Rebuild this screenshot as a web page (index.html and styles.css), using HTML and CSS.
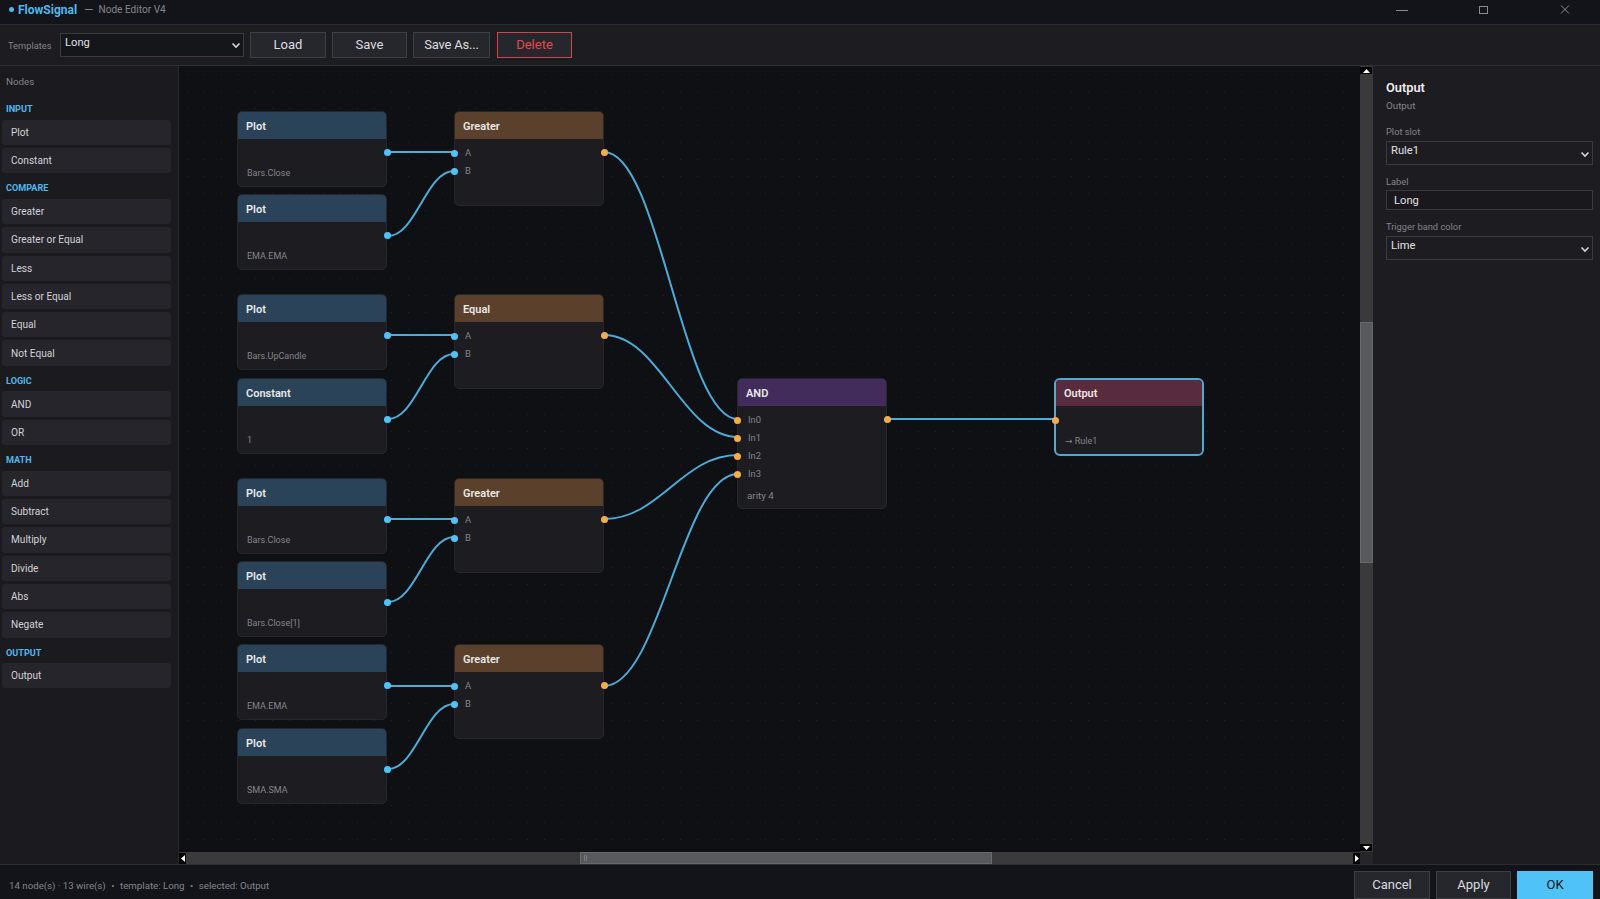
FILE: index.html
```html
<!DOCTYPE html>
<html lang="en">
<head>
  <meta charset="UTF-8">
  <title>FlowSignal - Node Editor V4</title>
  <link rel="stylesheet" href="styles.css">
</head>
<body>

  <!-- Title bar -->
  <header class="titlebar">
    <span class="brand"><span class="brand-dot"></span>FlowSignal</span>
    <span class="title-sep">—</span>
    <span class="title-text">Node Editor V4</span>
    <div class="window-btns">
      <svg width="12" height="12" viewBox="0 0 12 12"><path d="M0 6.5h12" stroke="#8a8a90" fill="none"/></svg>
      <svg width="12" height="12" viewBox="0 0 12 12"><rect x="1.5" y="2.5" width="8" height="7" stroke="#8a8a90" fill="none"/></svg>
      <svg width="12" height="12" viewBox="0 0 12 12"><path d="M1 1.5l8 8M9 1.5l-8 8" stroke="#8a8a90" fill="none"/></svg>
    </div>
  </header>

  <!-- Toolbar -->
  <div class="toolbar">
    <span class="tb-label">Templates</span>
    <div class="combo combo-tb">
      <select><option>Long</option></select>
      <svg class="chev" width="10" height="7" viewBox="0 0 10 7"><path d="M1.5 1.5L5 5l3.5-3.5" stroke="#d5d5d8" stroke-width="1.6" fill="none"/></svg>
    </div>
    <button class="btn btn-load">Load</button>
    <button class="btn btn-save">Save</button>
    <button class="btn btn-saveas">Save As...</button>
    <button class="btn btn-delete">Delete</button>
  </div>

  <div class="main">

    <!-- Node palette -->
    <aside class="palette">
      <div class="palette-title">Nodes</div>
      <div class="group">INPUT</div>
      <div class="item">Plot</div>
      <div class="item">Constant</div>
      <div class="group">COMPARE</div>
      <div class="item">Greater</div>
      <div class="item">Greater or Equal</div>
      <div class="item">Less</div>
      <div class="item">Less or Equal</div>
      <div class="item">Equal</div>
      <div class="item">Not Equal</div>
      <div class="group">LOGIC</div>
      <div class="item">AND</div>
      <div class="item">OR</div>
      <div class="group">MATH</div>
      <div class="item">Add</div>
      <div class="item">Subtract</div>
      <div class="item">Multiply</div>
      <div class="item">Divide</div>
      <div class="item">Abs</div>
      <div class="item">Negate</div>
      <div class="group">OUTPUT</div>
      <div class="item">Output</div>
    </aside>

    <!-- Canvas, origin is at 179,66 on the page -->
    <div class="canvas-wrap">
      <div class="canvas-row">
        <div class="canvas">
          <svg class="wires" width="1182" height="786" fill="none">
            <path d="M209 86H275"/>
            <path d="M209 170C237 170 247 105 275 105"/>
            <path d="M209 269H275"/>
            <path d="M209 353C237 353 247 288 275 288"/>
            <path d="M209 453H275"/>
            <path d="M209 536C237 536 247 471 275 471"/>
            <path d="M209 620H275"/>
            <path d="M209 703C237 703 247 638 275 638"/>
            <path d="M425 86C481 86 503 353 559 353"/>
            <path d="M425 269C481 269 503 371 559 371"/>
            <path d="M425 453C481 453 503 389 559 389"/>
            <path d="M425 620C481 620 503 408 559 408"/>
            <path d="M709 353H876"/>
          </svg>

          <div class="node" style="left:58px;top:45px"><div class="node-head head-input">Plot</div><div class="node-foot">Bars.Close</div><i class="port out blue"></i></div>
          <div class="node" style="left:58px;top:128px"><div class="node-head head-input">Plot</div><div class="node-foot">EMA.EMA</div><i class="port out blue"></i></div>
          <div class="node" style="left:58px;top:228px"><div class="node-head head-input">Plot</div><div class="node-foot">Bars.UpCandle</div><i class="port out blue"></i></div>
          <div class="node" style="left:58px;top:312px"><div class="node-head head-input">Constant</div><div class="node-foot">1</div><i class="port out blue"></i></div>
          <div class="node" style="left:58px;top:412px"><div class="node-head head-input">Plot</div><div class="node-foot">Bars.Close</div><i class="port out blue"></i></div>
          <div class="node" style="left:58px;top:495px"><div class="node-head head-input">Plot</div><div class="node-foot">Bars.Close[1]</div><i class="port out blue"></i></div>
          <div class="node" style="left:58px;top:578px"><div class="node-head head-input">Plot</div><div class="node-foot">EMA.EMA</div><i class="port out blue"></i></div>
          <div class="node" style="left:58px;top:662px"><div class="node-head head-input">Plot</div><div class="node-foot">SMA.SMA</div><i class="port out blue"></i></div>

          <div class="node node-cmp" style="left:275px;top:45px"><div class="node-head head-cmp">Greater</div><div class="pin">A<i class="port in blue"></i></div><div class="pin">B<i class="port in blue"></i></div><i class="port out orange"></i></div>
          <div class="node node-cmp" style="left:275px;top:228px"><div class="node-head head-cmp">Equal</div><div class="pin">A<i class="port in blue"></i></div><div class="pin">B<i class="port in blue"></i></div><i class="port out orange"></i></div>
          <div class="node node-cmp" style="left:275px;top:412px"><div class="node-head head-cmp">Greater</div><div class="pin">A<i class="port in blue"></i></div><div class="pin">B<i class="port in blue"></i></div><i class="port out orange"></i></div>
          <div class="node node-cmp" style="left:275px;top:578px"><div class="node-head head-cmp">Greater</div><div class="pin">A<i class="port in blue"></i></div><div class="pin">B<i class="port in blue"></i></div><i class="port out orange"></i></div>

          <div class="node node-and" style="left:558px;top:312px">
            <div class="node-head head-logic">AND</div>
            <div class="pin">In0<i class="port in orange"></i></div>
            <div class="pin">In1<i class="port in orange"></i></div>
            <div class="pin">In2<i class="port in orange"></i></div>
            <div class="pin">In3<i class="port in orange"></i></div>
            <div class="node-note">arity 4</div>
            <i class="port out orange"></i>
          </div>

          <div class="node node-selected" style="left:875px;top:312px">
            <div class="node-head head-output">Output</div>
            <div class="node-foot"><span class="arrow">→</span> Rule1</div>
            <i class="port in orange"></i>
          </div>
        </div>

        <div class="vscroll">
          <span class="sb-arrow"><svg width="7" height="4" viewBox="0 0 7 4"><path d="M3.5 0L7 4H0z" fill="#fff"/></svg></span>
          <div class="vscroll-track"><div class="vscroll-thumb"></div></div>
          <span class="sb-arrow"><svg width="7" height="4" viewBox="0 0 7 4"><path d="M0 0h7L3.5 4z" fill="#fff"/></svg></span>
        </div>
      </div>

      <div class="hscroll">
        <span class="sb-arrow-h"><svg width="4" height="7" viewBox="0 0 4 7"><path d="M4 0v7L0 3.5z" fill="#fff"/></svg></span>
        <div class="hscroll-track"><div class="hscroll-thumb"><span class="grip"></span></div></div>
        <span class="sb-arrow-h"><svg width="4" height="7" viewBox="0 0 4 7"><path d="M0 0l4 3.5L0 7z" fill="#fff"/></svg></span>
        <span class="sb-corner"></span>
      </div>
    </div>

    <!-- Properties -->
    <aside class="props">
      <div class="props-title">Output</div>
      <div class="props-sub">Output</div>
      <label class="field-label label-first">Plot slot</label>
      <div class="combo combo-prop">
        <select><option>Rule1</option></select>
        <svg class="chev" width="10" height="7" viewBox="0 0 10 7"><path d="M1.5 1.5L5 5l3.5-3.5" stroke="#d5d5d8" stroke-width="1.6" fill="none"/></svg>
      </div>
      <label class="field-label">Label</label>
      <input class="text-input" type="text" value="Long">
      <label class="field-label">Trigger band color</label>
      <div class="combo combo-prop">
        <select><option>Lime</option></select>
        <svg class="chev" width="10" height="7" viewBox="0 0 10 7"><path d="M1.5 1.5L5 5l3.5-3.5" stroke="#d5d5d8" stroke-width="1.6" fill="none"/></svg>
      </div>
    </aside>
  </div>

  <!-- Status bar -->
  <footer class="statusbar">
    <span class="status-text">14 node(s) · 13 wire(s)<span class="status-dot">•</span>template: Long<span class="status-dot">•</span>selected: Output</span>
    <div class="footer-btns">
      <button class="btn btn-foot btn-cancel">Cancel</button>
      <button class="btn btn-foot">Apply</button>
      <button class="btn btn-foot btn-ok">OK</button>
    </div>
  </footer>

</body>
</html>
```

FILE: styles.css
```css
* {
  box-sizing: border-box;
}

html, body {
  height: 100%;
}

body {
  display: flex;
  flex-direction: column;
  margin: 0;
  overflow: hidden;
  background-color: #15161a;
  color: #d8d8dc;
  font-family: Roboto, "Noto Sans", sans-serif;
  font-size: 10px;
}

/* Title bar */
.titlebar {
  display: flex;
  align-items: center;
  flex: 0 0 25px;
  padding: 0 0 5px 9px;
  background-color: #131419;
  border-bottom: 1px solid #2c2d32;
}

.brand {
  display: flex;
  align-items: center;
  color: #4fb7ec;
  font-size: 12px;
  font-weight: 700;
}

.brand-dot {
  width: 5px;
  height: 5px;
  margin-right: 4px;
  border-radius: 50%;
  background-color: #4fb7ec;
}

.title-sep {
  margin: 0 5px 0 7px;
  color: #85858b;
  font-size: 12px;
}

.title-text {
  color: #85858b;
  font-size: 10.1px;
}

.window-btns {
  display: flex;
  gap: 70px;
  margin-left: auto;
  margin-right: 28px;
}

/* Toolbar */
.toolbar {
  display: flex;
  align-items: center;
  flex: 0 0 41px;
  padding: 0 0 0 8px;
  background-color: #1c1c21;
  border-bottom: 1px solid #2e2f34;
}

.tb-label {
  width: 52px;
  color: #85858b;
  font-size: 9.3px;
}

.combo {
  position: relative;
}

.combo select {
  width: 100%;
  height: 100%;
  padding: 0 0 6px 4px;
  appearance: none;
  background-color: #15161a;
  border: 1px solid #3a3b40;
  border-radius: 0;
  color: #e0e0e3;
  font-family: inherit;
  font-size: 11.2px;
}

.chev {
  position: absolute;
  top: 9px;
  right: 3px;
}

.combo-tb {
  width: 184px;
  height: 24px;
  margin-right: 6px;
}

.btn {
  height: 26px;
  padding: 0 0 2px;
  background-color: #26272c;
  border: 1px solid #3e3f44;
  color: #dcdcdf;
  font-family: inherit;
  font-size: 13px;
}

.btn-load { width: 76px; margin-right: 6px; }
.btn-save { width: 75px; margin-right: 6px; }
.btn-saveas { width: 77px; margin-right: 7px; letter-spacing: -0.2px; }
.btn-delete {
  width: 75px;
  border-color: #c8484f;
  color: #e5484f;
}

/* Main row */
.main {
  display: flex;
  flex: 1;
  min-height: 0;
}

.palette {
  flex: 0 0 179px;
  padding: 10px 7px 0 2px;
  background-color: #1a1a1f;
  border-right: 1px solid #26272b;
}

.palette-title {
  height: 21px;
  padding: 0 0 0 4px;
  color: #85858b;
  font-size: 9.8px;
}

.group {
  height: 22.7px;
  padding: 7px 0 0 4px;
  color: #4fb7ec;
  font-size: 9.1px;
  font-weight: 700;
}

.item {
  display: flex;
  align-items: center;
  height: 25.3px;
  margin-bottom: 3px;
  padding-left: 9px;
  background-color: #25252b;
  border-radius: 3px;
  color: #d2d2d6;
  font-size: 10.1px;
}

/* Canvas */
.canvas-wrap {
  display: flex;
  flex-direction: column;
  flex: 1;
  min-width: 0;
}

.canvas-row {
  display: flex;
  flex: 1;
  min-height: 0;
}

.canvas {
  position: relative;
  flex: 1;
  overflow: hidden;
  background-color: #0f1014;
  background-image: radial-gradient(circle, #202126 0.7px, transparent 1px);
  background-size: 17px 17px;
}

.wires {
  position: absolute;
  top: 0;
  left: 0;
  z-index: 2;
}

.wires path {
  stroke: #4bacd9;
  stroke-width: 2;
}

.node {
  position: absolute;
  width: 150px;
  height: 76px;
  background-color: #1c1c21;
  border: 1px solid #26272c;
  border-radius: 5px;
}

.node-cmp {
  height: 95px;
}

.node-and {
  height: 131px;
}

.node-selected {
  height: 78px;
  border: 2px solid #4fa8d6;
  border-radius: 6px;
}

.node-head {
  display: flex;
  align-items: center;
  height: 27px;
  padding: 1px 0 0 8px;
  border-radius: 4px 4px 0 0;
  color: #e8e8ea;
  font-size: 11px;
  font-weight: 600;
}

.node-selected .node-head {
  height: 26px;
}

.head-input { background-color: #2a4359; }
.head-cmp { background-color: #5b412c; }
.head-logic { background-color: #422c5c; }
.head-output { background-color: #582c3e; }

.node-foot {
  position: absolute;
  left: 9px;
  bottom: 8px;
  color: #85858b;
  font-size: 9px;
}

.arrow {
  font-family: "DejaVu Sans", sans-serif;
}

.node-note {
  margin: 6px 0 0 9px;
  color: #85858b;
  font-size: 9.8px;
}

.pin {
  position: relative;
  height: 18.33px;
  padding-left: 10px;
  color: #85858b;
  font-size: 9.4px;
  line-height: 18px;
}

.node-head + .pin {
  margin-top: 4.5px;
}

.port {
  position: absolute;
  z-index: 3;
  width: 7px;
  height: 7px;
  border-radius: 50%;
}

.port.in {
  top: 6px;
  left: -4px;
}

.port.out {
  top: 37px;
  right: -5px;
}

.node-selected .port.in {
  top: 37px;
  left: -4px;
}

.blue { background-color: #4fc3f7; }
.orange { background-color: #f5ac4c; }

/* Scrollbars */
.vscroll {
  display: flex;
  flex-direction: column;
  flex: 0 0 13px;
  background-color: #3a3a3a;
}

.sb-arrow {
  display: flex;
  align-items: center;
  justify-content: center;
  height: 7px;
  margin: 1px 1px 1px 0;
  background-color: #000;
}

.vscroll-track {
  flex: 1;
  padding-top: 247px;
}

.vscroll-thumb {
  height: 241px;
  background-color: #58595c;
  border: 1px solid #68696c;
}

.hscroll {
  display: flex;
  flex: 0 0 12px;
  align-items: center;
  background-color: #3a3a3a;
}

.sb-arrow-h {
  display: flex;
  align-items: center;
  justify-content: center;
  width: 7px;
  height: 11px;
  background-color: #000;
}

.hscroll-track {
  flex: 1;
  height: 100%;
  padding-left: 394px;
}

.hscroll-thumb {
  display: flex;
  align-items: center;
  width: 412px;
  height: 100%;
  padding-left: 3px;
  background-color: #58595c;
  border: 1px solid #68696c;
}

.grip {
  width: 3px;
  height: 6px;
  border-left: 1px solid #7a7a7e;
  border-right: 1px solid #7a7a7e;
}

.sb-corner {
  flex: 0 0 13px;
  height: 100%;
  background-color: #26262a;
}

/* Properties */
.props {
  flex: 0 0 227px;
  padding: 14px 7px 0 13px;
  background-color: #1c1c21;
}

.props-title {
  color: #eeeef0;
  font-size: 12.8px;
  font-weight: 600;
}

.props-sub {
  margin-top: 5px;
  color: #85858b;
  font-size: 9.8px;
}

.field-label {
  display: block;
  height: 17.5px;
  padding-top: 3px;
  color: #85858b;
  font-size: 9.3px;
}

.label-first {
  margin-top: 12px;
}

.combo-prop {
  height: 24px;
  margin-bottom: 8px;
}

.combo-prop .chev {
  top: 10px;
}

.combo-prop select {
  padding-bottom: 5px;
  background-color: #1c1c21;
}

.text-input {
  display: block;
  width: 100%;
  height: 20px;
  margin-bottom: 8px;
  padding: 0 0 0 7px;
  background-color: #19191d;
  border: 1px solid #3a3b40;
  color: #e0e0e3;
  font-family: inherit;
  font-size: 11.2px;
}

/* Status bar */
.statusbar {
  display: flex;
  align-items: center;
  flex: 0 0 35px;
  padding: 6px 7px 0 9px;
  background-color: #131419;
  border-top: 1px solid #2c2d32;
}

.status-text {
  color: #85858b;
  font-size: 9.7px;
}

.status-dot {
  margin: 0 5.5px;
}

.footer-btns {
  display: flex;
  gap: 6px;
  margin-left: auto;
}

.btn-foot {
  width: 75px;
  height: 28px;
}

.btn-cancel {
  width: 76px;
}

.btn-ok {
  width: 76px;
  background-color: #4fc3f7;
  border-color: #4fc3f7;
  color: #10141a;
}
```
